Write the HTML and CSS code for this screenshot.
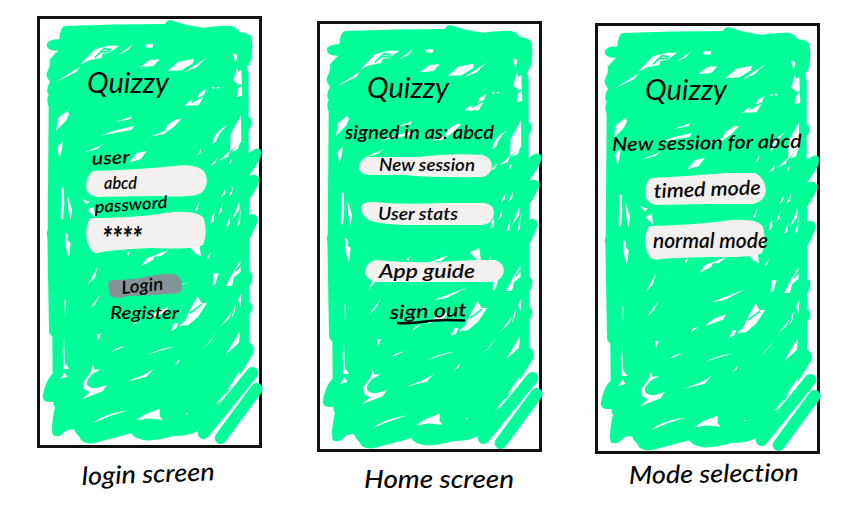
FILE: index.html
```
<!DOCTYPE html>
<html lang="en">
<head>
<meta charset="utf-8">
<title>Quizzy wireframes</title>
<link rel="stylesheet" href="styles.css">
</head>
<body>
<svg class="defs" width="0" height="0">
  <symbol id="scribble" viewBox="0 0 720 1320">
    <path class="paint" d="M105 48Q250 42 405 42Q410 28 425 31Q470 48 522 53Q580 46 605 48Q625 55 628 66Q662 68 665 85L667 110Q665 150 658 164Q652 165 652 178Q657 185 656 210V322Q668 325 664 345L656 362V430Q680 408 692 420Q696 440 685 455L657 498Q680 488 688 505Q690 520 657 570V615Q680 605 683 630Q680 645 657 690V785Q668 788 667 803Q666 818 657 830V875Q668 880 667 897Q664 908 657 915V995Q675 1010 671 1028L634 1088L590 1150L530 1235L505 1262Q480 1278 430 1278Q370 1295 340 1290Q310 1284 304 1270L190 1300Q155 1303 148 1280Q135 1270 132 1258Q110 1256 100 1270Q85 1285 68 1275Q62 1250 75 1192Q70 1190 70 1175Q40 1180 38 1160Q45 1115 68 1090L67 980Q55 970 57 960L52 680Q48 670 53 660L56 290Q48 270 56 255Q45 240 60 215Q45 195 52 185Q65 155 58 150Q80 125 85 122Q50 125 50 103Q55 88 88 88Q90 52 105 48Z"/>
    <path class="stroke-a" d="M667 1089L521 1269"/>
    <path class="stroke-b" d="M680 1137L572 1284"/>
    <path class="gap" d="M150 164L195 118L235 107L268 107L238 128L218 132L214 144L180 150ZM78 215L150 170L140 185ZM265 135L309 103L295 120ZM346 103H370L368 113L346 112ZM330 172L358 150L389 148L370 168ZM413 183L445 155L492 146L489 160L455 181ZM460 188L532 142L500 172ZM609 128L622 136L617 164ZM610 212L621 172L626 186L634 180L637 258L619 261L627 225ZM463 287L480 272L500 270L508 250L529 236L520 262L506 286ZM547 232h7v4h-7ZM560 231h8v4h-8ZM78 362L84 325L112 302L117 312L108 332ZM256 337L306 319L302 327ZM210 377L260 360L312 348L305 359ZM360 380L405 362L412 345L440 327L453 328L430 352L400 373ZM546 403Q552 365 592 345Q565 370 558 395ZM600 425L602 372L633 316L634 395ZM82 412L98 394L96 417L88 446ZM160 428L222 403L200 418ZM298 457L320 430L351 422L332 448ZM500 440L514 414L513 426ZM540 468L562 444L556 460ZM568 452L600 422L594 440ZM606 425L632 392L624 418ZM597 460L606 440L602 462ZM92 628L94 535L101 532L103 580L99 628ZM112 552L126 600L122 632L115 600ZM156 568L180 575L170 583ZM172 600L191 590L196 622L184 612ZM104 668L114 674L112 690L122 700L117 742L108 715ZM541 642L546 618L553 609L551 634ZM564 615L578 578L574 606ZM572 563L587 535L585 552ZM595 560L610 528L606 552ZM588 650L602 612L598 645ZM606 630L628 575L628 600ZM622 650L632 595L630 640ZM494 602L508 574L502 600ZM334 768L350 745L376 735L370 749ZM368 738L416 720L392 739ZM290 732L300 722L296 738ZM480 712L508 700L513 739L497 731ZM530 745L543 725L538 744ZM174 824L204 768L195 802ZM178 897L213 850L196 882ZM105 918L103 867L108 872ZM370 856L475 815L410 849ZM548 828L550 790L566 790L556 822ZM588 828L610 786L631 750L632 785L612 802L606 828ZM624 870L634 850L632 890ZM307 947L316 934L332 930ZM350 928L376 906L415 891L405 908ZM424 962L432 940L445 940L438 956ZM447 948L466 931L481 897L503 858L515 880L532 878L504 920L474 946ZM570 952L605 905L598 924ZM604 926L617 878L615 905ZM588 1033L630 963L627 998ZM518 1020L560 965L540 995ZM100 1077L98 1020L102 980L105 1060L118 1077ZM200 972L212 972L205 992ZM245 1025Q260 1012 283 1009L258 1021ZM352 1035Q390 1014 432 1010L390 1022ZM434 1065L450 1044L446 1058ZM188 1064L194 1079L213 1078L190 1090Q160 1118 175 1129Q188 1142 231 1124L218 1144L156 1168L180 1146L164 1139L158 1118L181 1089ZM90 1107L104 1087L112 1101ZM288 1115L340 1095L371 1077L350 1100ZM188 1240Q225 1210 294 1201L238 1219ZM320 1230L345 1213L389 1196L389 1218L398 1230L380 1228Q355 1223 335 1229ZM556 1184L592 1142L576 1170ZM592 1140L631 1080L626 1112ZM468 1209h6v4h-6Z"/>
    <path class="hatch" d="M196 141L222 116L242 119M514 160L538 149M212 126L238 124M570 470L626 424M618 782L632 765M482 908L514 884M618 238L632 226M486 276L520 258"/>
  </symbol>
</svg>
<main class="board">
  <section class="screen login">
    <div class="phone">
      <svg class="scribble"><use href="#scribble"/></svg>
      <svg class="title"><text x="0" y="20" textLength="82" lengthAdjust="spacingAndGlyphs">Quizzy</text></svg>
      <svg class="ink user-label"><text x="0" y="15" textLength="38" lengthAdjust="spacingAndGlyphs" transform="rotate(-3 0 15)">user</text></svg>
      <svg class="ink user-field"><path class="pill" d="M7 6Q50 5 88 1Q113-2 119 8Q124 20 115 28Q108 33 70 31L12 32Q-1 30 0 20Q1 10 7 6Z"/><text x="18" y="24" textLength="33" lengthAdjust="spacingAndGlyphs">abcd</text></svg>
      <svg class="ink pass-label"><text x="0" y="16" textLength="73" lengthAdjust="spacingAndGlyphs" transform="rotate(-4 0 16)">password</text></svg>
      <svg class="ink pass-field"><path class="pill" d="M5 6Q50 6 78 1Q112-3 118 7Q122 22 117 33Q108 38 65 36Q25 38 16 40Q8 43 5 38Q-2 27 1 14Q2 8 5 6Z"/><text class="stars" x="16" y="37" textLength="40" lengthAdjust="spacingAndGlyphs">****</text></svg>
      <svg class="ink button"><path class="gray" d="M4 6Q25 6 42 2Q65-2 70 2Q78 12 71 19Q45 22 20 22Q8 26 2 22Q-1 12 1 7Z"/><text x="14" y="20" textLength="42" lengthAdjust="spacingAndGlyphs" transform="rotate(-6 14 20)">Login</text></svg>
      <svg class="ink register"><text x="0" y="16" textLength="69" lengthAdjust="spacingAndGlyphs">Register</text></svg>
    </div>
    <svg class="ink caption"><text x="0" y="37" textLength="133" lengthAdjust="spacingAndGlyphs" transform="rotate(-2 0 37)">login screen</text></svg>
  </section>
  <section class="screen home">
    <div class="phone">
      <svg class="scribble"><use href="#scribble"/></svg>
      <svg class="title"><text x="0" y="20" textLength="82" lengthAdjust="spacingAndGlyphs">Quizzy</text></svg>
      <svg class="ink signed"><text x="0" y="15" textLength="149" lengthAdjust="spacingAndGlyphs">signed in as: abcd</text></svg>
      <svg class="ink new-session"><path class="pill" d="M9 2Q30 2 60 2Q90-2 124 0Q133 3 133 12Q131 21 123 22Q75 23 45 20L12 20Q0 20 0 11Q1 4 9 2Z"/><text x="20" y="16" textLength="96" lengthAdjust="spacingAndGlyphs">New session</text></svg>
      <svg class="ink stats"><path class="pill" d="M10 0Q45 3 78 1H124Q133 3 133 11Q132 22 121 23H45Q15 22 8 18Q-1 12 0 5Q2 0 10 0Z"/><text x="17" y="18" textLength="80" lengthAdjust="spacingAndGlyphs">User stats</text></svg>
      <svg class="ink guide"><path class="pill" d="M10 0Q45 3 72 2L110 0H130Q139 3 139 11Q137 22 124 22H12Q0 20 0 11Q1 3 10 0Z"/><text x="14" y="18" textLength="96" lengthAdjust="spacingAndGlyphs">App guide</text></svg>
      <svg class="ink signout"><text x="0" y="15" textLength="77" lengthAdjust="spacingAndGlyphs" transform="rotate(-2 0 15)">sign out</text><path class="line" d="M8 19Q20 20 35 17.5T74 16.5"/></svg>
    </div>
    <svg class="ink caption"><text x="0" y="36" textLength="150" lengthAdjust="spacingAndGlyphs">Home screen</text></svg>
  </section>
  <section class="screen mode">
    <div class="phone">
      <svg class="scribble"><use href="#scribble"/></svg>
      <svg class="title"><text x="0" y="20" textLength="82" lengthAdjust="spacingAndGlyphs">Quizzy</text></svg>
      <svg class="ink session-for"><text x="0" y="17" textLength="190" lengthAdjust="spacingAndGlyphs" transform="rotate(-1 0 17)">New session for abcd</text></svg>
      <svg class="ink timed"><path class="pill" d="M6 5Q45 3 82 0H110Q120 5 121 18Q119 29 108 31H65L10 32Q0 29 0 19Q1 8 6 5Z"/><text x="9" y="25" textLength="107" lengthAdjust="spacingAndGlyphs" transform="rotate(-2 9 25)">timed mode</text></svg>
      <svg class="ink normal"><path class="pill" d="M5 6Q50 5 78 1Q112-3 118 7Q122 22 117 33Q108 38 65 37Q25 38 16 39Q8 41 5 37Q-2 27 1 14Q2 8 5 6Z"/><text x="8" y="28" textLength="115" lengthAdjust="spacingAndGlyphs">normal mode</text></svg>
    </div>
    <svg class="ink caption"><text x="0" y="30" textLength="170" lengthAdjust="spacingAndGlyphs" transform="rotate(-1 0 30)">Mode selection</text></svg>
  </section>
</main>
</body>
</html>
```
FILE: styles.css
```
* { box-sizing: border-box; }
body { margin: 0; background: #fff; }
svg { display: block; overflow: visible; flex: none; }
.defs { position: absolute; }
.board { display: flex; gap: 55px; padding-left: 37px; width: 857px; height: 527px; overflow: hidden; }
.screen { width: 225px; flex: none; padding-top: 16px; }
.home { padding-top: 21px; }
.mode { padding-top: 22.5px; margin-left: -2px; }
.phone { position: relative; display: flex; flex-direction: column; width: 225px; height: 432px; border: 3px solid #111; }
.home .phone, .mode .phone { height: 431px; }
.scribble { position: absolute; left: -10px; top: -9px; width: 240px; height: 440px; }
.phone > svg:not(.scribble) { position: relative; }

.paint { fill: #00ff99; }
.stroke-a, .stroke-b { stroke: #00ff99; stroke-width: 36; stroke-linecap: round; fill: none; }
.gap { fill: #fff; }
.hatch { fill: none; stroke: #00ff99; stroke-width: 5; stroke-linecap: round; }
.pill { fill: #f2f1ef; }
.gray { fill: #839397; }
.line { fill: none; stroke: #080808; stroke-width: 2.5; stroke-linecap: round; }

.title { width: 83px; height: 32px; margin: 54px 0 0 47px; font: italic 400 29px Lato, sans-serif; fill: #080808; }
.ink { font: italic 600 17px Lato, sans-serif; font-variant-ligatures: none; fill: #080808; }

.user-label { width: 38px; height: 15px; margin: 45px 0 0 52px; font-size: 18px; }
.user-field { width: 121px; height: 32px; margin-left: 46px; }
.pass-label { width: 73px; height: 15px; margin-left: 55px; z-index: 1; }
.pass-field { width: 121px; height: 40px; margin-left: 46px; }
.stars { font-size: 30px; font-weight: 900; }
.button { width: 74px; height: 24px; margin: 22px 0 0 68px; font-size: 18px; }
.register { width: 70px; height: 20px; margin: 5px 0 0 70px; font-size: 18px; }

.signed { width: 150px; height: 18px; margin: 14px 0 0 25px; font-size: 19px; }
.new-session { width: 133px; height: 21px; margin: 13px 0 0 39px; }
.stats { width: 133px; height: 23px; margin: 26px 0 0 41px; }
.guide { width: 139px; height: 22px; margin: 35px 0 0 45px; font-size: 20px; }
.signout { width: 78px; height: 20px; margin: 22px 0 0 70px; font-size: 19px; }

.session-for { width: 190px; height: 20px; margin: 22px 0 0 14px; font-size: 19px; }
.timed { width: 121px; height: 31px; margin: 19px 0 0 47px; font-size: 20px; }
.normal { width: 121px; height: 38px; margin: 16px 0 0 47px; font-size: 21px; }

.caption { width: 170px; height: 50px; font-size: 25px; font-weight: 500; }
.login .caption { margin-left: 45px; }
.home .caption { margin-left: 47px; }
.mode .caption { margin-left: 34px; }
```
